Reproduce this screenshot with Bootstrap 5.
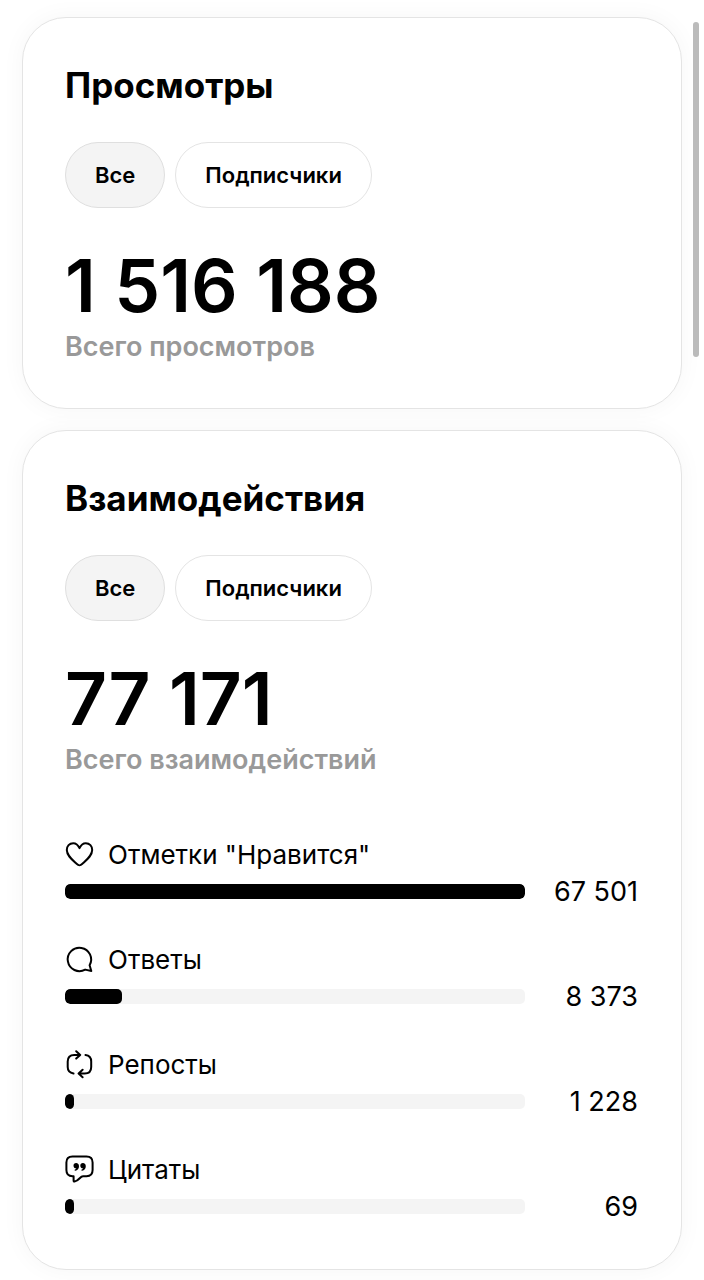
<!DOCTYPE html>
<html lang="ru">
<head>
<meta charset="utf-8">
<meta name="viewport" content="width=device-width, initial-scale=1">
<title>Статистика</title>
<link href="https://cdn.jsdelivr.net/npm/bootstrap@5.3.0/dist/css/bootstrap.min.css" rel="stylesheet">
<style>
  body { font-family: Inter, "Liberation Sans", sans-serif; color: #000; background: #fff; overflow-x: hidden; }
  .insights { padding: 17px 22px 10px 22px; gap: 21px; }
  .stat-card { border: 1px solid #e4e4e4; border-radius: 44px; padding: 44px 43px 40px 42px; box-shadow: 0 0 24px rgba(0, 0, 0, .04); }
  .stat-title { font-size: 35px; line-height: 46px; font-weight: 700; margin-bottom: 34px; }
  .filters { gap: 10px; margin-bottom: 38px; }
  .pill { --bs-btn-font-size: 22px; --bs-btn-line-height: 30px; --bs-btn-font-weight: 600; --bs-btn-padding-x: 29px; --bs-btn-padding-y: 17px;
    --bs-btn-border-color: #e4e4e4; --bs-btn-color: #000; --bs-btn-bg: #fff; --bs-btn-hover-bg: #f8f8f8; --bs-btn-hover-color: #000; --bs-btn-hover-border-color: #dcdcdc;
    --bs-btn-active-bg: #f4f4f4; --bs-btn-active-color: #000; --bs-btn-active-border-color: #dfdfdf; }
  .total { font-size: 73px; line-height: 80px; font-weight: 600; }
  .total-label { font-size: 27px; line-height: 42px; font-weight: 600; color: #999; }
  .metrics { margin-top: 56px; margin-bottom: 4px; gap: 32px; }
  .metric { font-size: 26px; }
  .metric-name { gap: 13px; line-height: 36px; }
  .metric-name svg { width: 30px; height: 30px; flex: none; }
  .metric-value { width: 113px; font-size: 27px; line-height: 37px; }
  .meter { height: 15px; border-radius: 5px; background: #f4f4f4; }
  .meter .progress-bar { background: #000; border-radius: 5px; min-width: 9px; }
  .scroll-thumb { top: 22px; right: 5px; width: 6px; height: 335px; background: #bbb; }
</style>
</head>
<body class="position-relative">
<main class="insights d-flex flex-column">
  <section class="stat-card bg-white">
    <h2 class="stat-title">Просмотры</h2>
    <div class="filters d-flex">
      <button type="button" class="btn pill rounded-pill active" aria-pressed="true">Все</button>
      <button type="button" class="btn pill rounded-pill" aria-pressed="false">Подписчики</button>
    </div>
    <div class="total">1 516 188</div>
    <div class="total-label">Всего просмотров</div>
  </section>

  <section class="stat-card bg-white">
    <h2 class="stat-title">Взаимодействия</h2>
    <div class="filters d-flex">
      <button type="button" class="btn pill rounded-pill active" aria-pressed="true">Все</button>
      <button type="button" class="btn pill rounded-pill" aria-pressed="false">Подписчики</button>
    </div>
    <div class="total">77 171</div>
    <div class="total-label">Всего взаимодействий</div>

    <div class="metrics d-flex flex-column">
      <div class="metric">
        <div class="metric-name d-flex align-items-center">
          <svg viewBox="0 0 30 30" fill="none" stroke="#000" stroke-width="2" stroke-linejoin="round" aria-hidden="true"><path d="M14.500 8.200C13 4.800 10.800 3.200 8.200 3.200 4.400 3.200 1.800 6.200 1.800 10c0 5.400 5.200 9.600 9.800 13.800 2.300 2.100 3.500 2.100 5.800 0C22 19.600 27.200 15.400 27.200 10c0-3.800-2.600-6.800-6.400-6.800-2.600 0-4.800 1.600-6.300 5z"/></svg>
          <span>Отметки "Нравится"</span>
        </div>
        <div class="d-flex align-items-center">
          <div class="progress meter flex-grow-1" role="progressbar" aria-label="Отметки Нравится" aria-valuemin="0" aria-valuemax="67501" aria-valuenow="67501"><div class="progress-bar" style="width:100%"></div></div>
          <div class="metric-value text-end">67 501</div>
        </div>
      </div>
      <div class="metric">
        <div class="metric-name d-flex align-items-center">
          <svg viewBox="0 0 30 30" fill="none" stroke="#000" stroke-width="2" stroke-linejoin="round" aria-hidden="true"><path d="M24.600 20.200A11.700 11.700 0 1 0 20.200 24.600L26.300 26z"/></svg>
          <span>Ответы</span>
        </div>
        <div class="d-flex align-items-center">
          <div class="progress meter flex-grow-1" role="progressbar" aria-label="Ответы" aria-valuemin="0" aria-valuemax="67501" aria-valuenow="8373"><div class="progress-bar" style="width:12.4%"></div></div>
          <div class="metric-value text-end">8 373</div>
        </div>
      </div>
      <div class="metric">
        <div class="metric-name d-flex align-items-center">
          <svg viewBox="0 0 30 30" fill="none" stroke="#000" stroke-width="2" stroke-linecap="round" stroke-linejoin="round" aria-hidden="true"><path d="M8.500 23.500C4.500 22.800 2.700 20.800 2.700 17V11.500C2.700 7 4.700 4.900 9.200 4.900H15M11.200 1.200 15.200 4.900 11.200 8.600M20.500 4.900C24.500 5.300 26.200 7.600 26.200 11.500V17C26.200 21.600 24.200 23.500 19.700 23.500H14M17.600 19.800 13.600 23.500 17.600 27.200"/></svg>
          <span>Репосты</span>
        </div>
        <div class="d-flex align-items-center">
          <div class="progress meter flex-grow-1" role="progressbar" aria-label="Репосты" aria-valuemin="0" aria-valuemax="67501" aria-valuenow="1228"><div class="progress-bar" style="width:1.8%"></div></div>
          <div class="metric-value text-end">1 228</div>
        </div>
      </div>
      <div class="metric">
        <div class="metric-name d-flex align-items-center">
          <svg viewBox="0 0 30 30" fill="none" stroke="#000" stroke-width="2" stroke-linejoin="round" aria-hidden="true"><path d="M7.500 1.400H21.500Q27.600 1.400 27.600 7.500V15Q27.600 21.200 21.500 21.200H18C15 21.200 14.500 25.400 9.500 26.500Q8.600 26.700 8.600 25.800V21.200H7.500Q1.400 21.200 1.400 15V7.500Q1.400 1.400 7.500 1.400z"/><g fill="#000" stroke="none"><path id="quote" d="M11.100 8.100C12.900 8.100 14 9.400 14 11.200 14 13.800 12.500 15.300 10.400 15.800 9.500 16 9.200 15 10 14.600 10.800 14.200 11.200 13.900 11.400 13.500 9.700 13.600 8.500 12.500 8.500 10.800 8.500 9.200 9.500 8.100 11.100 8.100z"/><use href="#quote" x="6.800"/></g></svg>
          <span>Цитаты</span>
        </div>
        <div class="d-flex align-items-center">
          <div class="progress meter flex-grow-1" role="progressbar" aria-label="Цитаты" aria-valuemin="0" aria-valuemax="67501" aria-valuenow="69"><div class="progress-bar" style="width:0.1%"></div></div>
          <div class="metric-value text-end">69</div>
        </div>
      </div>
    </div>
  </section>
</main>
<div class="scroll-thumb position-absolute rounded-pill" aria-hidden="true"></div>
<script src="https://cdn.jsdelivr.net/npm/bootstrap@5.3.0/dist/js/bootstrap.bundle.min.js"></script>
</body>
</html>
